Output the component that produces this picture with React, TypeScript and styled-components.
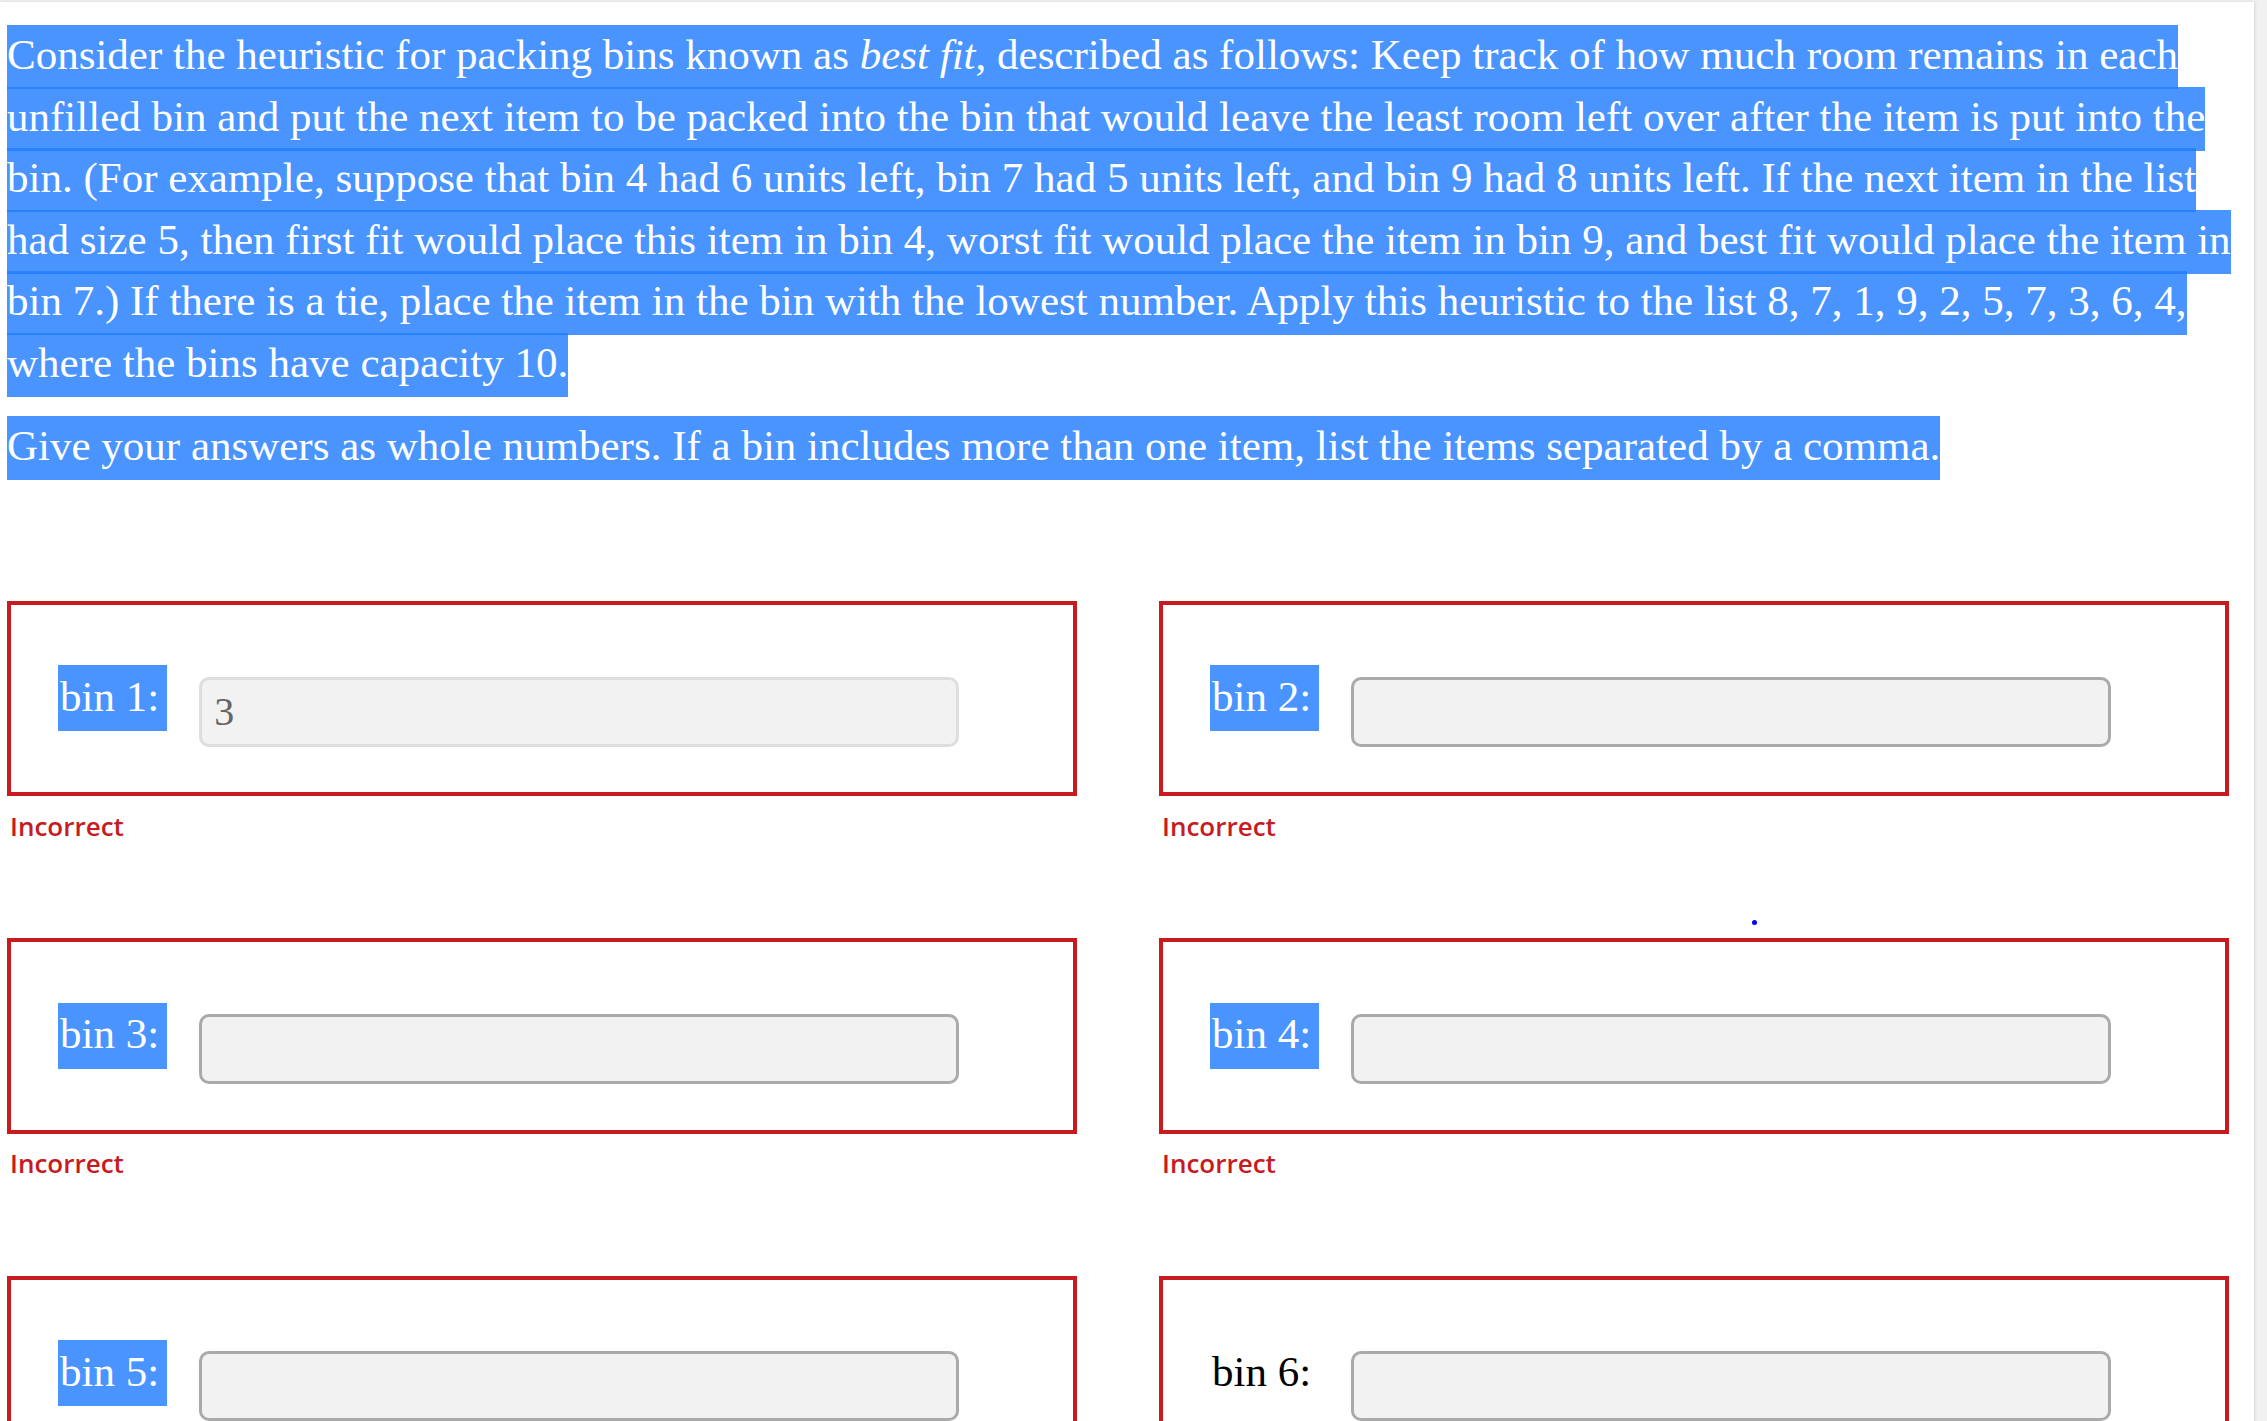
import styled, { createGlobalStyle } from 'styled-components';

const GlobalStyle = createGlobalStyle`
  html, body {
    margin: 0;
    padding: 0;
  }
  body {
    background: #f1f1f1;
    font-family: "Liberation Serif", "Times New Roman", serif;
    overflow: hidden;
  }
`;

const SELECTION = 'rgba(33, 125, 255, 0.82)';

const Page = styled.main`
  position: relative;
  box-sizing: border-box;
  width: 2254px;
  min-height: 1419px;
  margin-top: 2px;
  padding: 21.75px 10px 0 7px;
  background: #fff;
  box-shadow: 1px 0 3px rgba(0, 0, 0, 0.12);
  overflow: hidden;
`;

const Question = styled.div`
  width: 2234px;
`;

const Para = styled.p`
  margin: 0 0 22px;
  font-size: 43px;
  line-height: 61.5px;
  color: #000;

  &:last-child {
    margin-bottom: 0;
  }
`;

const Sel = styled.span`
  background: ${SELECTION};
  color: #fff;
  padding: 5.7px 0 11.7px;
`;

const BinGrid = styled.div`
  display: grid;
  grid-template-columns: 1070px 1070px;
  column-gap: 82px;
  row-gap: 94.5px;
  margin-top: 124.5px;
`;

const BinCell = styled.div`
  display: flex;
  flex-direction: column;
`;

const BinBox = styled.div`
  display: flex;
  align-items: flex-start;
  gap: 32px;
  padding: 60.7px 0 45.5px 47px;
  border: 4px solid #c71b1f;
`;

const BinLabel = styled.label<{ $selected: boolean }>`
  font-size: 43px;
  line-height: 48px;
  padding: 7.5px 8px 10.5px 2px;
  background: ${(p) => (p.$selected ? SELECTION : 'transparent')};
  color: ${(p) => (p.$selected ? '#fff' : '#000')};
  white-space: nowrap;
`;

const BinInput = styled.input<{ $locked: boolean }>`
  box-sizing: border-box;
  width: 760px;
  height: 70px;
  margin-top: 11.3px;
  padding: 0 12px;
  border: 3px solid ${(p) => (p.$locked ? '#dedede' : '#aaaaaa')};
  border-radius: 10px;
  background: #f2f2f2;
  font-family: "Liberation Serif", "Times New Roman", serif;
  font-size: 40px;
  color: #666;
  outline: none;
`;

const Feedback = styled.div`
  margin-top: 11.4px;
  padding-left: 3px;
  font-family: "Open Sans", "Liberation Sans", sans-serif;
  font-size: 26px;
  font-weight: 600;
  line-height: 36px;
  color: #c71b1f;
`;

const Dot = styled.span`
  position: absolute;
  left: 1751.5px;
  top: 918.2px;
  width: 5px;
  height: 5px;
  border-radius: 50%;
  background: #0000ff;
`;

const bins = [
  { n: 1, value: '3', locked: true, selected: true, feedback: true },
  { n: 2, value: '', locked: false, selected: true, feedback: true },
  { n: 3, value: '', locked: false, selected: true, feedback: true },
  { n: 4, value: '', locked: false, selected: true, feedback: true },
  { n: 5, value: '', locked: false, selected: true, feedback: false },
  { n: 6, value: '', locked: false, selected: false, feedback: false },
];

export default function App() {
  return (
    <>
      <GlobalStyle />
      <Page>
        <Question>
          <Para>
            <Sel>
              Consider the heuristic for packing bins known as <i>best fit</i>, described as
              follows: Keep track of how much room remains in each unfilled bin and put the next
              item to be packed into the bin that would leave the least room left over after the
              item is put into the bin. (For example, suppose that bin 4 had 6 units left, bin 7
              had 5 units left, and bin 9 had 8 units left. If the next item in the list had size
              5, then first fit would place this item in bin 4, worst fit would place the item in
              bin 9, and best fit would place the item in bin 7.) If there is a tie, place the item
              in the bin with the lowest number. Apply this heuristic to the list 8, 7, 1, 9, 2, 5,
              7, 3, 6, 4, where the bins have capacity 10.
            </Sel>
          </Para>
          <Para>
            <Sel>
              Give your answers as whole numbers. If a bin includes more than one item, list the
              items separated by a comma.
            </Sel>
          </Para>
        </Question>

        <BinGrid>
          {bins.map((b) => (
            <BinCell key={b.n}>
              <BinBox>
                <BinLabel $selected={b.selected} htmlFor={`bin-${b.n}`}>
                  bin {b.n}:
                </BinLabel>
                <BinInput
                  id={`bin-${b.n}`}
                  $locked={b.locked}
                  defaultValue={b.value}
                  readOnly={b.locked}
                />
              </BinBox>
              {b.feedback && <Feedback>Incorrect</Feedback>}
            </BinCell>
          ))}
        </BinGrid>

        <Dot />
      </Page>
    </>
  );
}
